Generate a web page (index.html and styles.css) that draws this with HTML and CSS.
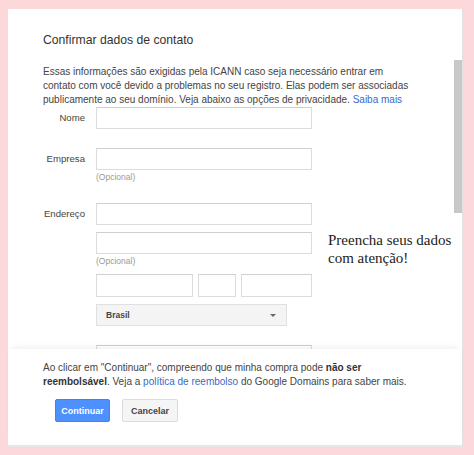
FILE: index.html
```html
<!DOCTYPE html>
<html lang="pt-BR">
<head>
    <meta charset="UTF-8">
    <meta name="viewport" content="width=device-width, initial-scale=1.0">
    <title>Confirmar dados de contato</title>
    <link rel="stylesheet" href="styles.css">
</head>
<body>

    <div class="card">
        <h1 class="title">Confirmar dados de contato</h1>

        <!-- Scrollable form -->
        <div class="scroll">
            <div class="content">
                <p class="intro">
                    Essas informações são exigidas pela ICANN caso seja necessário entrar em
                    contato com você devido a problemas no seu registro. Elas podem ser associadas
                    publicamente ao seu domínio. Veja abaixo as opções de privacidade. <a href="#">Saiba mais</a>
                </p>

                <div class="form">
                    <label class="label">Nome</label>
                    <div class="field">
                        <input type="text" class="input">
                    </div>

                    <label class="label label-gap">Empresa</label>
                    <div class="field field-gap">
                        <input type="text" class="input">
                        <div class="hint">(Opcional)</div>
                    </div>

                    <label class="label label-gap-lg">Endereço</label>
                    <div class="field field-gap-lg">
                        <input type="text" class="input">
                        <input type="text" class="input input-next">
                        <div class="hint">(Opcional)</div>
                        <div class="split">
                            <input type="text" class="input city">
                            <input type="text" class="input state">
                            <input type="text" class="input zip">
                        </div>
                        <div class="select">
                            <span>Brasil</span>
                            <span class="caret"></span>
                        </div>
                        <input type="text" class="input input-last">
                    </div>
                </div>
            </div>
            <div class="scrollbar"><div class="thumb"></div></div>
        </div>

        <!-- Footer -->
        <div class="footer">
            <p class="notice">
                Ao clicar em "Continuar", compreendo que minha compra pode <b>não ser
                reembolsável</b>. Veja a <a href="#">política de reembolso</a> do Google Domains para saber mais.
            </p>
            <div class="buttons">
                <button class="btn btn-primary">Continuar</button>
                <button class="btn">Cancelar</button>
            </div>
        </div>

        <div class="note">Preencha seus dados<br>com atenção!</div>
    </div>

</body>
</html>
```

FILE: styles.css
```css
body {
    margin: 0;
    background-color: #fdd8da;
    font-family: Arial, "Liberation Sans", sans-serif;
    color: #444;
}

.card {
    position: relative;
    display: flex;
    flex-direction: column;
    box-sizing: border-box;
    height: 438px;
    margin: 9px 10px 0 8px;
    background-color: #ffffff;
    border-right: 2px solid #e2e2e2;
    border-bottom: 2px solid #e6e6e6;
}

.title {
    margin: 0;
    padding: 22px 0 0 35px;
    height: 29px;
    font-size: 12.2px;
    line-height: 18px;
    font-weight: normal;
    color: #333;
}

.scroll {
    display: flex;
    height: 289px;
    overflow: hidden;
}

.content {
    flex: 1;
    padding: 5px 0 0 35px;
}

.scrollbar {
    width: 8px;
}

.thumb {
    height: 153px;
    background-color: #c8c8c8;
}

a {
    color: #3b68c8;
    text-decoration: none;
}

.intro {
    max-width: 372px;
    margin: 0;
    font-size: 10px;
    line-height: 14px;
    color: #444;
}

.form {
    display: grid;
    grid-template-columns: 42px 216px;
    column-gap: 11px;
    align-items: start;
}

.label {
    text-align: right;
    font-size: 9.6px;
    line-height: 22px;
    color: #444;
    white-space: nowrap;
}

.label-gap {
    margin-top: 19px;
}

.label-gap-lg {
    margin-top: 20px;
}

.field {
    display: flex;
    flex-direction: column;
}

.field-gap {
    margin-top: 19px;
}

.field-gap-lg {
    margin-top: 20px;
}

.input {
    box-sizing: border-box;
    height: 22px;
    margin: 0;
    padding: 0 6px;
    border: 1px solid #dcdcdc;
    border-top-color: #d0d0d0;
    background-color: #fff;
    outline: none;
}

.input-next {
    margin-top: 7px;
}

.hint {
    margin-top: 2px;
    font-size: 8.5px;
    line-height: 11px;
    color: #999;
}

.split {
    display: flex;
    gap: 5px;
    margin-top: 7px;
}

.split .input {
    height: 23px;
}

.city {
    width: 97px;
}

.state {
    width: 38px;
}

.zip {
    width: 71px;
}

.select {
    box-sizing: border-box;
    display: flex;
    align-items: center;
    justify-content: space-between;
    width: 191px;
    height: 22px;
    margin-top: 7px;
    padding: 0 10px 0 9px;
    border: 1px solid #e0e0e0;
    background-color: #f4f4f4;
    font-size: 8.5px;
    font-weight: bold;
    color: #444;
}

.caret {
    width: 0;
    height: 0;
    border-left: 3px solid transparent;
    border-right: 3px solid transparent;
    border-top: 3px solid #666;
}

.input-last {
    margin-top: 19px;
}

.footer {
    flex: 1;
    padding: 12px 0 0 35px;
    box-shadow: 0 -5px 7px -4px rgba(0, 0, 0, 0.08);
    position: relative;
    background-color: #fff;
}

.notice {
    max-width: 375px;
    margin: 0;
    font-size: 10px;
    line-height: 14px;
    color: #444;
}

.notice b {
    color: #333;
}

.buttons {
    display: flex;
    gap: 12px;
    margin-top: 10px;
    padding-left: 12px;
}

.btn {
    box-sizing: border-box;
    height: 23px;
    padding: 0;
    font-family: Arial, "Liberation Sans", sans-serif;
    font-size: 9px;
    font-weight: bold;
    color: #444;
    background-color: #f5f5f5;
    border: 1px solid #dcdcdc;
    border-radius: 2px;
    cursor: pointer;
}

.btn-primary {
    width: 55px;
    color: #fff;
    background-color: #4d90fe;
    border-color: #3c83f7;
}

.btn + .btn {
    width: 56px;
}

.note {
    position: absolute;
    left: 320px;
    top: 222px;
    font-family: "Liberation Serif", "Times New Roman", serif;
    font-size: 15px;
    line-height: 18px;
    color: #222;
}
```
